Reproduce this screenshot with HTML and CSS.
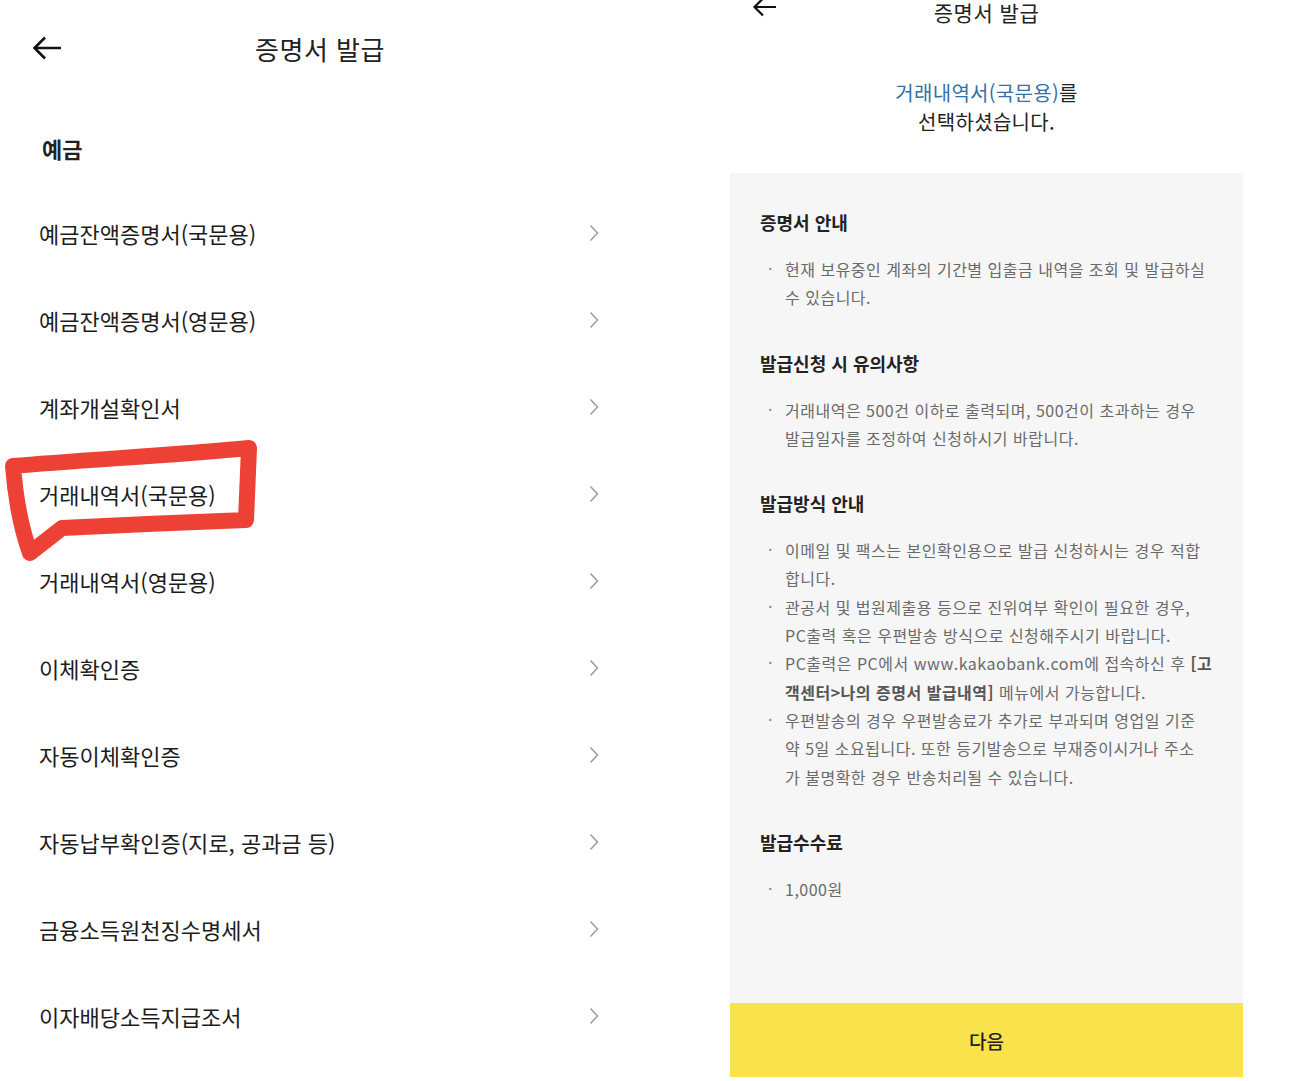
FILE: index.html
```html
<!DOCTYPE html>
<html lang="ko">
<head>
  <meta charset="UTF-8" />
  <meta name="viewport" content="width=device-width, initial-scale=1.0"/>
  <title>증명서 발급</title>
  <link rel="stylesheet" href="styles.css">
</head>
<body>

  <div class="screens">

    <!-- 왼쪽: 증명서 목록 -->
    <section class="screen list-screen">
      <header class="topbar">
        <button class="back" aria-label="뒤로">
          <svg width="30" height="24" viewBox="0 0 30 24"><path d="M29 12H2.5M13 1.5L2.5 12L13 22.5" fill="none" stroke="#111" stroke-width="2.6"/></svg>
        </button>
        <h1>증명서 발급</h1>
      </header>

      <h2 class="group-title">예금</h2>

      <ul class="doc-list">
        <li><span>예금잔액증명서(국문용)</span><svg class="chev" width="10" height="18" viewBox="0 0 10 18"><path d="M1.5 1.5L8.5 9L1.5 16.5" fill="none" stroke="#9b9b9b" stroke-width="1.5"/></svg></li>
        <li><span>예금잔액증명서(영문용)</span><svg class="chev" width="10" height="18" viewBox="0 0 10 18"><path d="M1.5 1.5L8.5 9L1.5 16.5" fill="none" stroke="#9b9b9b" stroke-width="1.5"/></svg></li>
        <li><span>계좌개설확인서</span><svg class="chev" width="10" height="18" viewBox="0 0 10 18"><path d="M1.5 1.5L8.5 9L1.5 16.5" fill="none" stroke="#9b9b9b" stroke-width="1.5"/></svg></li>
        <li><span>거래내역서(국문용)</span><svg class="chev" width="10" height="18" viewBox="0 0 10 18"><path d="M1.5 1.5L8.5 9L1.5 16.5" fill="none" stroke="#9b9b9b" stroke-width="1.5"/></svg></li>
        <li><span>거래내역서(영문용)</span><svg class="chev" width="10" height="18" viewBox="0 0 10 18"><path d="M1.5 1.5L8.5 9L1.5 16.5" fill="none" stroke="#9b9b9b" stroke-width="1.5"/></svg></li>
        <li><span>이체확인증</span><svg class="chev" width="10" height="18" viewBox="0 0 10 18"><path d="M1.5 1.5L8.5 9L1.5 16.5" fill="none" stroke="#9b9b9b" stroke-width="1.5"/></svg></li>
        <li><span>자동이체확인증</span><svg class="chev" width="10" height="18" viewBox="0 0 10 18"><path d="M1.5 1.5L8.5 9L1.5 16.5" fill="none" stroke="#9b9b9b" stroke-width="1.5"/></svg></li>
        <li><span>자동납부확인증(지로, 공과금 등)</span><svg class="chev" width="10" height="18" viewBox="0 0 10 18"><path d="M1.5 1.5L8.5 9L1.5 16.5" fill="none" stroke="#9b9b9b" stroke-width="1.5"/></svg></li>
        <li><span>금융소득원천징수명세서</span><svg class="chev" width="10" height="18" viewBox="0 0 10 18"><path d="M1.5 1.5L8.5 9L1.5 16.5" fill="none" stroke="#9b9b9b" stroke-width="1.5"/></svg></li>
        <li><span>이자배당소득지급조서</span><svg class="chev" width="10" height="18" viewBox="0 0 10 18"><path d="M1.5 1.5L8.5 9L1.5 16.5" fill="none" stroke="#9b9b9b" stroke-width="1.5"/></svg></li>
      </ul>

      <!-- 빨간 펜 표시 -->
      <svg class="marker" width="640" height="1081" viewBox="0 0 640 1081">
        <path d="M13 466 C80 460 180 455 249 448 L246 520 C190 522 120 525 62 528 L30 553 C20 525 15 492 13 466 Z" fill="none" stroke="#ee4136" stroke-width="16" stroke-linejoin="round"/>
      </svg>
    </section>

    <!-- 오른쪽: 선택한 증명서 안내 -->
    <section class="screen detail-screen">
      <header class="topbar small">
        <button class="back" aria-label="뒤로">
          <svg width="25" height="20" viewBox="0 0 25 20"><path d="M24 10H2.5M11 1.5L2.5 10L11 18.5" fill="none" stroke="#111" stroke-width="2.2"/></svg>
        </button>
        <h1>증명서 발급</h1>
      </header>

      <p class="selected"><span class="hl">거래내역서(국문용)</span>를<br>선택하셨습니다.</p>

      <div class="info-box">
        <div class="info">
          <h3>증명서 안내</h3>
          <ul>
            <li>현재 보유중인 계좌의 기간별 입출금 내역을 조회 및 발급하실<br>수 있습니다.</li>
          </ul>
        </div>
        <div class="info">
          <h3>발급신청 시 유의사항</h3>
          <ul>
            <li>거래내역은 500건 이하로 출력되며, 500건이 초과하는 경우<br>발급일자를 조정하여 신청하시기 바랍니다.</li>
          </ul>
        </div>
        <div class="info">
          <h3>발급방식 안내</h3>
          <ul>
            <li>이메일 및 팩스는 본인확인용으로 발급 신청하시는 경우 적합<br>합니다.</li>
            <li>관공서 및 법원제출용 등으로 진위여부 확인이 필요한 경우,<br>PC출력 혹은 우편발송 방식으로 신청해주시기 바랍니다.</li>
            <li>PC출력은 PC에서 www.kakaobank.com에 접속하신 후 <b>[고<br>객센터&gt;나의 증명서 발급내역]</b> 메뉴에서 가능합니다.</li>
            <li>우편발송의 경우 우편발송료가 추가로 부과되며 영업일 기준<br>약 5일 소요됩니다. 또한 등기발송으로 부재중이시거나 주소<br>가 불명확한 경우 반송처리될 수 있습니다.</li>
          </ul>
        </div>
        <div class="info">
          <h3>발급수수료</h3>
          <ul>
            <li>1,000원</li>
          </ul>
        </div>
      </div>

      <button class="next-btn">다음</button>
    </section>

  </div>

</body>
</html>
```

FILE: styles.css
```css
body {
  margin: 0;
  background-color: #fff;
  font-family: "Noto Sans CJK KR", "Noto Sans", sans-serif;
  color: #1a1a1a;
}

.screens {
  display: flex;
  gap: 90px;
  height: 1081px;
  overflow: hidden;
}

.screen {
  position: relative;
  flex-shrink: 0;
}

button {
  font-family: inherit;
  background: none;
  border: none;
  padding: 0;
  cursor: pointer;
}

/* 상단바 */
.topbar {
  display: grid;
  grid-template-columns: 1fr auto 1fr;
  align-items: center;
  height: 96px;
}

.topbar .back {
  justify-self: start;
  display: flex;
  margin-left: 32px;
}

.topbar h1 {
  margin: 0;
  font-size: 26px;
  font-weight: 400;
  letter-spacing: 0.5px;
  color: #222;
}

.topbar.small {
  height: 24px;
  line-height: 24px;
}

.topbar.small .back {
  margin-left: 22px;
  margin-top: -10px;
}

.topbar.small h1 {
  font-size: 21px;
  line-height: 24px;
  letter-spacing: 0.5px;
}

/* 목록 화면 */
.list-screen {
  width: 640px;
}

.group-title {
  margin: 37px 0 26.5px 42px;
  font-size: 22px;
  line-height: 30px;
  font-weight: 700;
  color: #222;
}

.doc-list {
  list-style: none;
  margin: 0;
  padding: 0;
}

.doc-list li {
  display: flex;
  justify-content: space-between;
  align-items: center;
  height: 87px;
  padding: 0 40px 0 39px;
  font-size: 22px;
  color: #1c1c1c;
}

.doc-list .chev {
  margin-right: 1px;
}

.marker {
  position: absolute;
  left: 0;
  top: 0;
  pointer-events: none;
}

/* 상세 화면 */
.detail-screen {
  width: 513px;
}

.selected {
  margin: 54px 0 37px;
  text-align: center;
  font-size: 20px;
  line-height: 29px;
  letter-spacing: 0.3px;
  color: #222;
}

.selected .hl {
  color: #3670a6;
}

.info-box {
  background-color: #f6f6f6;
  padding: 37px 30px 0;
  height: 830px;
  box-sizing: border-box;
}

.info + .info {
  margin-top: 39px;
}

.info h3 {
  margin: 0;
  font-size: 18px;
  line-height: 24px;
  font-weight: 700;
  color: #222;
}

.info ul {
  list-style: none;
  margin: 21px 0 0;
  padding: 0;
}

.info li {
  position: relative;
  padding-left: 25px;
  font-size: 16px;
  line-height: 28.3px;
  letter-spacing: 0.5px;
  color: #6a6a6a;
  white-space: nowrap;
}

.info li::before {
  content: "·";
  position: absolute;
  left: 8px;
  top: -1px;
  color: #888;
}

.info li b {
  font-weight: 700;
  color: #555;
}

.next-btn {
  display: block;
  width: 100%;
  height: 74px;
  background-color: #fae24c;
  font-size: 19px;
  font-weight: 500;
  color: #222;
}
```
